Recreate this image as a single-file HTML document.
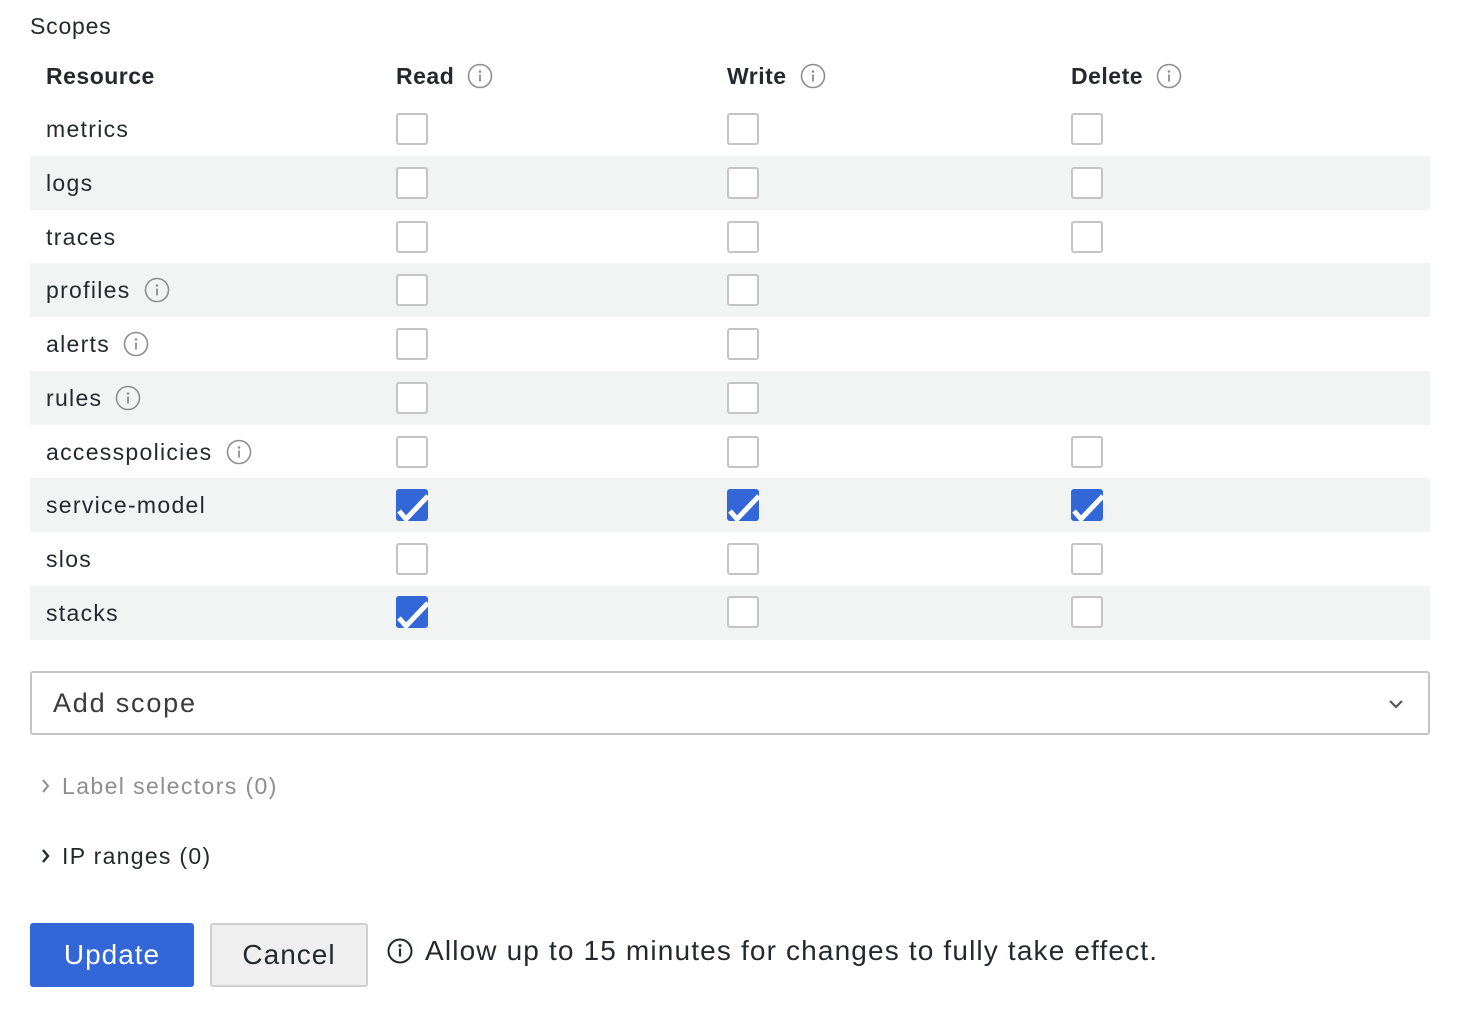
<!DOCTYPE html>
<html><head><meta charset="utf-8"><style>
*{margin:0;padding:0;box-sizing:border-box}
body{width:1458px;height:1018px;background:#fff;font-family:"Liberation Sans",sans-serif;color:#24292e;position:relative;overflow:hidden}
.a{position:absolute}
.t{font-size:23px;letter-spacing:1.3px;line-height:28px;white-space:nowrap}
.b{font-weight:bold;letter-spacing:0.5px}
.band{position:absolute;left:30px;width:1400px;height:54px;background:#f2f3f3}
.cb{position:absolute;width:32px;height:32px;border:2px solid #c4c4c4;border-radius:3px;background:#fff}
.ic{display:inline-block;vertical-align:-5px;margin-left:13px}
</style></head><body>
<svg width="0" height="0" style="position:absolute"><defs><g id="i"><circle cx="13" cy="13" r="11.5" fill="none" stroke="#8e8e8e" stroke-width="1.6"/><circle cx="13" cy="8.5" r="1.3" fill="#8e8e8e"/><rect x="12.1" y="11.5" width="1.8" height="7" fill="#8e8e8e"/></g>
<g id="c"><rect x="0" y="0" width="32" height="32" rx="3" fill="#3366d6"/><polyline points="3,22 10,30 32,7" fill="none" stroke="#fff" stroke-width="5"/></g></defs></svg>
<div class="a t" style="left:30px;top:12px;letter-spacing:0.8px">Scopes</div>
<div class="a t b" style="left:46px;top:62px">Resource</div>
<div class="a t b" style="left:396px;top:62px">Read<svg class="ic" width="26" height="26"><use href="#i"/></svg></div>
<div class="a t b" style="left:727px;top:62px">Write<svg class="ic" width="26" height="26"><use href="#i"/></svg></div>
<div class="a t b" style="left:1071px;top:62px">Delete<svg class="ic" width="26" height="26"><use href="#i"/></svg></div>

<div class="band" style="top:156px"></div>
<div class="band" style="top:263px"></div>
<div class="band" style="top:371px"></div>
<div class="band" style="top:478px"></div>
<div class="band" style="top:586px"></div>

<div class="a t" style="left:46px;top:115px">metrics</div>
<div class="a t" style="left:46px;top:169px">logs</div>
<div class="a t" style="left:46px;top:223px">traces</div>
<div class="a t" style="left:46px;top:276px">profiles<svg class="ic" width="26" height="26"><use href="#i"/></svg></div>
<div class="a t" style="left:46px;top:330px">alerts<svg class="ic" width="26" height="26"><use href="#i"/></svg></div>
<div class="a t" style="left:46px;top:384px">rules<svg class="ic" width="26" height="26"><use href="#i"/></svg></div>
<div class="a t" style="left:46px;top:438px">accesspolicies<svg class="ic" width="26" height="26"><use href="#i"/></svg></div>
<div class="a t" style="left:46px;top:491px">service-model</div>
<div class="a t" style="left:46px;top:545px">slos</div>
<div class="a t" style="left:46px;top:599px">stacks</div>

<svg class="a" style="left:0;top:0" width="1458" height="1018">
<polyline points="1390,701 1396,707 1402,701" fill="none" stroke="#555" stroke-width="2.2"/>
<polyline points="43,780 48,786 43,792" fill="none" stroke="#8e8e8e" stroke-width="2"/>
<polyline points="43,850 48,856 43,862" fill="none" stroke="#24292e" stroke-width="2.4"/>
<circle cx="400" cy="951" r="11.5" fill="none" stroke="#24292e" stroke-width="2"/><circle cx="400" cy="945.5" r="1.5" fill="#24292e"/><rect x="398.9" y="948.5" width="2.2" height="8" fill="#24292e"/>
</svg>

<div class="cb" style="left:396px;top:113px"></div><div class="cb" style="left:727px;top:113px"></div><div class="cb" style="left:1071px;top:113px"></div>
<div class="cb" style="left:396px;top:167px"></div><div class="cb" style="left:727px;top:167px"></div><div class="cb" style="left:1071px;top:167px"></div>
<div class="cb" style="left:396px;top:221px"></div><div class="cb" style="left:727px;top:221px"></div><div class="cb" style="left:1071px;top:221px"></div>
<div class="cb" style="left:396px;top:274px"></div><div class="cb" style="left:727px;top:274px"></div>
<div class="cb" style="left:396px;top:328px"></div><div class="cb" style="left:727px;top:328px"></div>
<div class="cb" style="left:396px;top:382px"></div><div class="cb" style="left:727px;top:382px"></div>
<div class="cb" style="left:396px;top:436px"></div><div class="cb" style="left:727px;top:436px"></div><div class="cb" style="left:1071px;top:436px"></div>
<div class="cb" style="left:396px;top:543px"></div><div class="cb" style="left:727px;top:543px"></div><div class="cb" style="left:1071px;top:543px"></div>
<div class="cb" style="left:727px;top:596px"></div><div class="cb" style="left:1071px;top:596px"></div>

<svg class="a" style="left:0;top:0" width="1458" height="1018">
<use href="#c" x="396" y="489"/><use href="#c" x="727" y="489"/><use href="#c" x="1071" y="489"/><use href="#c" x="396" y="596"/>
</svg>

<div class="a" style="left:30px;top:671px;width:1400px;height:64px;border:2px solid #c4c4c4;border-radius:3px"></div>
<div class="a" style="left:53px;top:686px;font-size:27px;letter-spacing:1.8px;color:#3a3a3a;line-height:34px">Add scope</div>
<div class="a t" style="left:62px;top:772px;color:#8e8e8e;letter-spacing:1.4px">Label selectors (0)</div>
<div class="a t" style="left:62px;top:842px;letter-spacing:1.3px">IP ranges (0)</div>

<div class="a" style="left:30px;top:923px;width:164px;height:64px;background:#3366d6;border-radius:3px;color:#fff;font-size:28px;letter-spacing:1px;line-height:64px;text-align:center">Update</div>
<div class="a" style="left:210px;top:923px;width:158px;height:64px;background:#efefef;border:2px solid #cfcfcf;border-radius:3px;color:#24292e;font-size:28px;letter-spacing:1px;line-height:60px;text-align:center">Cancel</div>
<div class="a" style="left:425px;top:934px;font-size:28px;letter-spacing:1.15px;line-height:34px;white-space:nowrap">Allow up to 15 minutes for changes to fully take effect.</div>
</body></html>
